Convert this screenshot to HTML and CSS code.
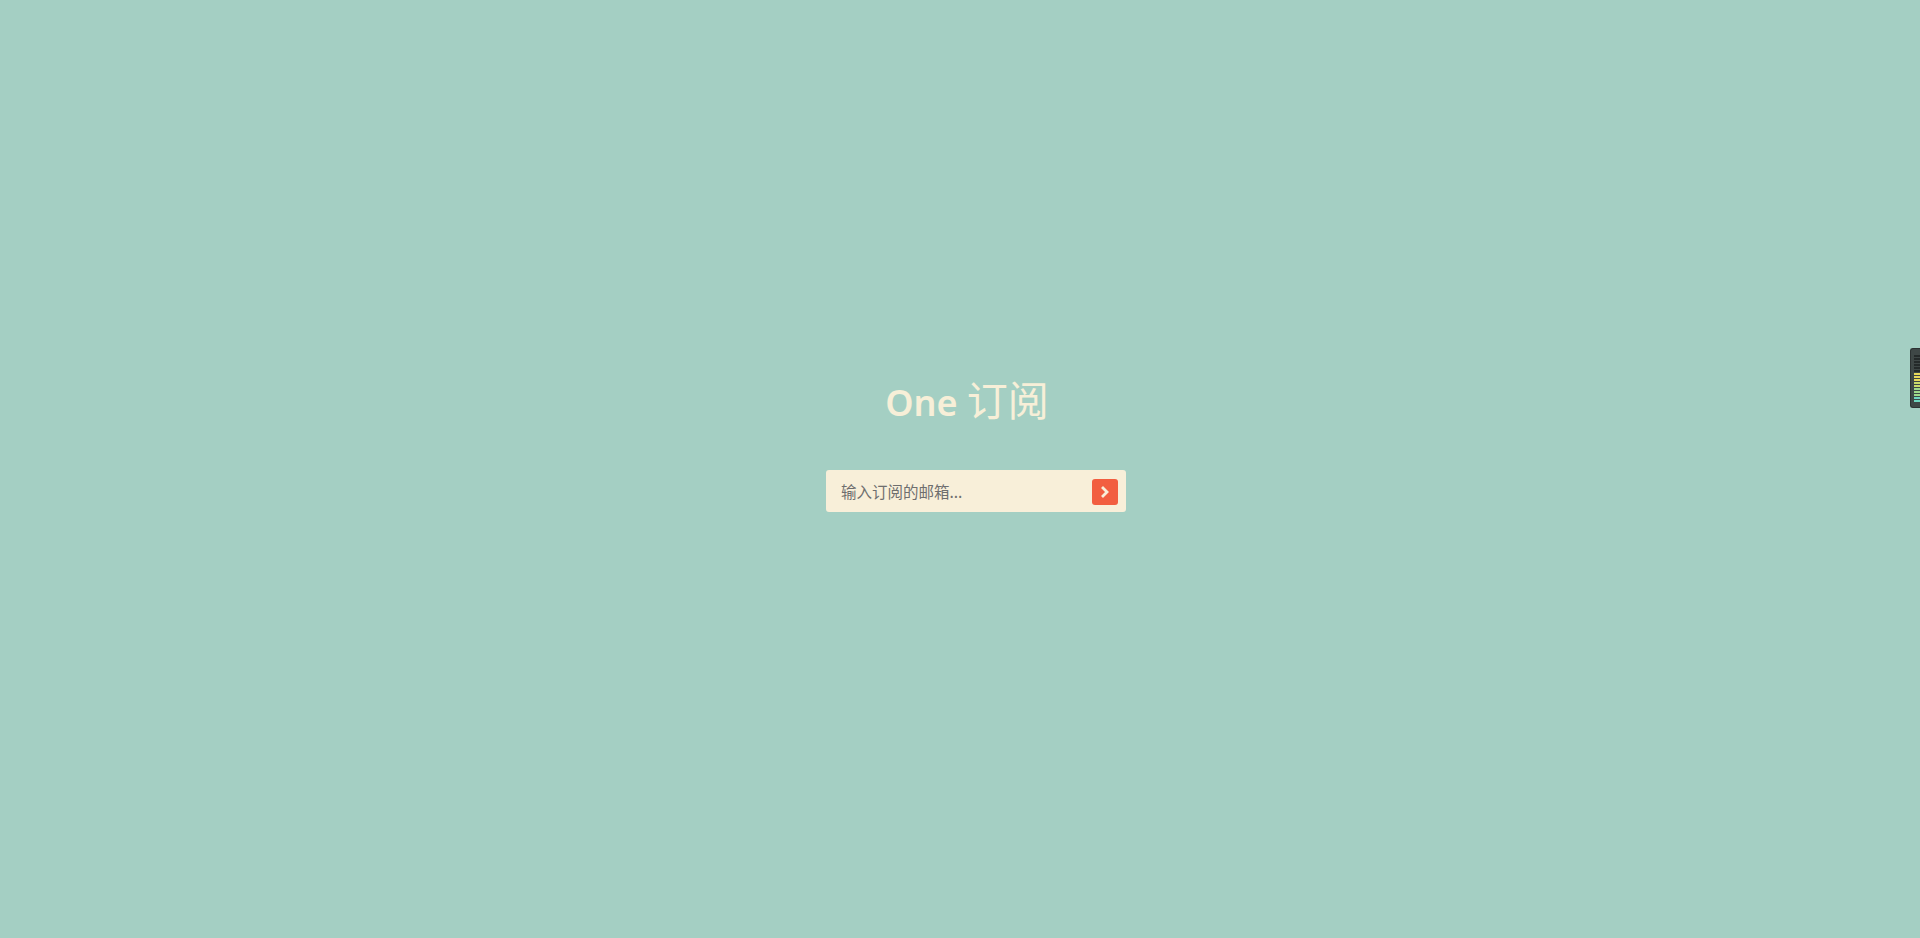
FILE: index.html
```html
<!DOCTYPE html>
<html lang="zh-CN">
<head>
<meta charset="utf-8">
<title>One 订阅</title>
<link rel="stylesheet" href="styles.css">
</head>
<body>
<main class="page">
  <section class="subscribe">
    <h1 class="title">One <span class="title-cjk">订阅</span></h1>
    <form class="field">
      <input class="email" type="text" placeholder="输入订阅的邮箱...">
      <button class="go" type="button" aria-label="订阅">
        <svg width="14" height="14" viewBox="0 0 14 14"><path d="M5 3 L9 7 L5 11" fill="none" stroke="#f8efd9" stroke-width="2.8" stroke-linecap="square"/></svg>
      </button>
    </form>
  </section>
</main>
<div class="meter">
  <i class="d"></i><i class="d"></i><i class="d"></i><i class="d"></i><i class="d"></i><i class="d"></i>
  <i class="y"></i><i class="y"></i><i class="y"></i><i class="yg"></i><i class="yg"></i><i class="g"></i><i class="g"></i><i class="g"></i><i class="t"></i><i class="t"></i>
</div>
</body>
</html>
```

FILE: styles.css
```css
html, body {
  margin: 0;
  padding: 0;
  height: 100%;
}
body {
  background: #a4cfc3;
  font-family: "Noto Sans", "Noto Sans CJK SC", sans-serif;
  overflow: hidden;
}
.page {
  height: 100%;
  display: flex;
  justify-content: center;
  padding-left: 32px;
  box-sizing: border-box;
}
.subscribe {
  width: 300px;
  padding-top: 373px;
  display: flex;
  flex-direction: column;
  align-items: center;
}
.title {
  margin: 0 18px 0 0;
  font-size: 36px;
  line-height: 50px;
  font-weight: 600;
  color: #f7efd8;
  letter-spacing: 0;
  white-space: nowrap;
}
.title-cjk {
  font-weight: 400;
  font-size: 41px;
  font-family: "Noto Sans CJK SC", sans-serif;
}
.field {
  margin-top: 42px;
  width: 300px;
  height: 42px;
  background: #f8efd9;
  border-radius: 3px;
  display: flex;
  align-items: center;
  padding: 0 8px 0 15px;
  box-sizing: border-box;
}
.email {
  flex: 1;
  border: 0;
  outline: 0;
  background: transparent;
  font-family: "Noto Sans CJK SC", sans-serif;
  font-size: 15.5px;
  color: #666;
  padding: 0;
  height: 42px;
}
.email::placeholder {
  color: #6e6e6e;
}
.go {
  width: 26px;
  height: 26px;
  border: 0;
  padding: 0;
  border-radius: 3px;
  background: #f25e40;
  display: flex;
  align-items: center;
  justify-content: center;
  margin-top: 1px;
}
.meter {
  position: absolute;
  right: 0;
  top: 348px;
  width: 10px;
  height: 60px;
  background: #3e4746;
  border: 1px solid #2c3232;
  border-right: 0;
  border-radius: 3px 0 0 3px;
  display: flex;
  flex-direction: column;
  align-items: flex-end;
  gap: 1px;
  padding: 6px 0 0 0;
  box-sizing: border-box;
}
.meter i {
  display: block;
  width: 6px;
  height: 2px;
}
.meter .d { background: #242a2a; }
.meter .y { background: #e8d95a; }
.meter .yg { background: #c9dc6a; }
.meter .g { background: #9fd98a; }
.meter .t { background: #6fd6c0; }
```
